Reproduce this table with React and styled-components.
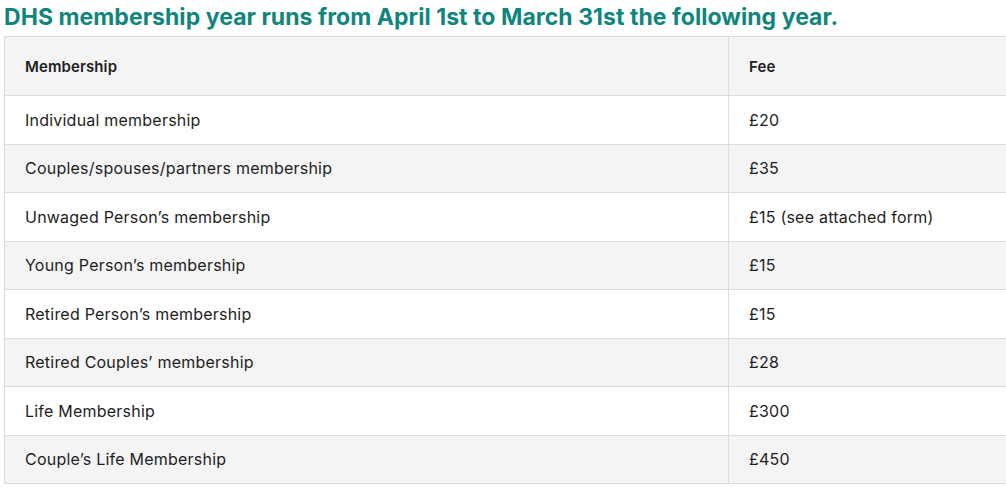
import styled, { createGlobalStyle } from "styled-components";

const GlobalStyle = createGlobalStyle`
  body {
    margin: 0;
    background: #fff;
    font-family: Inter, "Noto Sans", sans-serif;
    overflow: hidden;
  }
`;

const Page = styled.div`
  padding: 0 0 0 4px;
`;

const Title = styled.h2`
  margin: 0;
  padding-top: 2px;
  height: 34px;
  font-size: 23px;
  line-height: 30px;
  font-weight: 700;
  color: #10857d;
  letter-spacing: 0.05px;
`;

const Table = styled.table`
  width: 1010px;
  border-collapse: collapse;
  border: 1px solid #dcdcdc;
  font-size: 16px;
  color: #1e1e1e;
`;

const HeadCell = styled.th`
  text-align: left;
  font-weight: 600;
  font-size: 15px;
  height: 59px;
  padding: 0 20px;
  background: #f4f4f4;
  border: 1px solid #dcdcdc;
  width: ${(p) => p.$w || "auto"};
  box-sizing: border-box;
  letter-spacing: 0.1px;
`;

const Row = styled.tr`
  background: ${(p) => (p.$striped ? "#f4f4f4" : "#fff")};
`;

const Cell = styled.td`
  height: 47.5px;
  padding: 0 20px;
  border: 1px solid #dcdcdc;
  letter-spacing: 0.22px;
`;

const fees = [
  ["Individual membership", "£20"],
  ["Couples/spouses/partners membership", "£35"],
  ["Unwaged Person’s membership", "£15 (see attached form)"],
  ["Young Person’s membership", "£15"],
  ["Retired Person’s membership", "£15"],
  ["Retired Couples’ membership", "£28"],
  ["Life Membership", "£300"],
  ["Couple’s Life Membership", "£450"],
];

export default function App() {
  return (
    <Page>
      <GlobalStyle />
      <Title>DHS membership year runs from April 1st to March 31st the following year.</Title>
      <Table>
        <thead>
          <tr>
            <HeadCell $w="724px">Membership</HeadCell>
            <HeadCell>Fee</HeadCell>
          </tr>
        </thead>
        <tbody>
          {fees.map(([name, fee], i) => (
            <Row key={name} $striped={i % 2 === 1}>
              <Cell>{name}</Cell>
              <Cell>{fee}</Cell>
            </Row>
          ))}
        </tbody>
      </Table>
    </Page>
  );
}
